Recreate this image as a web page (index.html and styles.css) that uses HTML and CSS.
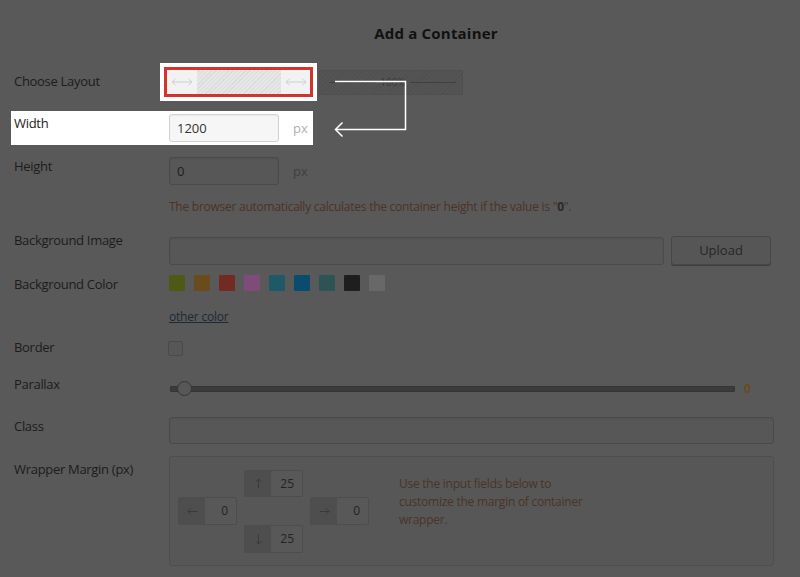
FILE: index.html
```html
<!DOCTYPE html>
<html lang="en">
<head>
<meta charset="utf-8">
<title>Add a Container</title>
<link rel="stylesheet" href="styles.css">
</head>
<body>
<div class="page">
  <h1 class="title">Add a Container</h1>

  <div class="row row-layout">
    <div class="label label-layout">Choose Layout</div>
    <div class="control layouts">
      <div class="spot spot-layout">
        <div class="layout layout-boxed">
          <div class="side"><svg width="22" height="8" viewBox="0 0 22 8"><path d="M1 4H21M4.5 1L1 4L4.5 7M17.5 1L21 4L17.5 7" fill="none" stroke="#cfcfcf" stroke-width="1"/></svg></div>
          <div class="hatch"></div>
          <div class="side"><svg width="22" height="8" viewBox="0 0 22 8"><path d="M1 4H21M4.5 1L1 4L4.5 7M17.5 1L21 4L17.5 7" fill="none" stroke="#cfcfcf" stroke-width="1"/></svg></div>
        </div>
      </div>
      <div class="layout layout-full">
        <span class="full-line"></span>
        <span class="full-text">100%</span>
        <span class="full-line"></span>
      </div>
    </div>
  </div>

  <div class="row row-width spot">
    <div class="label">Width</div>
    <div class="control inline">
      <div class="input input-short input-lit">1200</div>
      <span class="unit unit-lit">px</span>
    </div>
  </div>

  <div class="row row-height">
    <div class="label">Height</div>
    <div class="control inline">
      <div class="input input-short">0</div>
      <span class="unit">px</span>
    </div>
  </div>

  <div class="row row-help">
    <div class="label"></div>
    <div class="control help">The browser automatically calculates the container height if the value is "<b>0</b>".</div>
  </div>

  <div class="row row-image">
    <div class="label">Background Image</div>
    <div class="control inline pad5">
      <div class="input input-image"></div>
      <div class="button">Upload</div>
    </div>
  </div>

  <div class="row row-color">
    <div class="label">Background Color</div>
    <div class="control swatches">
      <span class="swatch c1"></span>
      <span class="swatch c2"></span>
      <span class="swatch c3"></span>
      <span class="swatch c4"></span>
      <span class="swatch c5"></span>
      <span class="swatch c6"></span>
      <span class="swatch c7"></span>
      <span class="swatch c8"></span>
      <span class="swatch c9"></span>
    </div>
  </div>

  <div class="row row-other">
    <div class="label"></div>
    <div class="control"><a class="link" href="#">other color</a></div>
  </div>

  <div class="row row-border">
    <div class="label">Border</div>
    <div class="control pad3"><span class="checkbox"></span></div>
  </div>

  <div class="row row-parallax">
    <div class="label">Parallax</div>
    <div class="control slider-wrap">
      <div class="slider"><span class="thumb"></span></div>
      <span class="slider-value">0</span>
    </div>
  </div>

  <div class="row row-class">
    <div class="label">Class</div>
    <div class="control"><div class="input input-class"></div></div>
  </div>

  <div class="row row-wrapper">
    <div class="label label-wrapper">Wrapper Margin (px)</div>
    <div class="control">
      <div class="margin-box">
        <div class="margin-grid">
          <div class="minput m-top"><span class="marrow"><svg width="9" height="11" viewBox="0 0 9 11"><path d="M4.5 10.5V1M1.5 4L4.5 1L7.5 4" fill="none" stroke="#3a3a3a" stroke-width="1"/></svg></span><span class="mval">25</span></div>
          <div class="minput m-left"><span class="marrow"><svg width="11" height="9" viewBox="0 0 11 9"><path d="M10.5 4.5H1M4 1.5L1 4.5L4 7.5" fill="none" stroke="#3a3a3a" stroke-width="1"/></svg></span><span class="mval">0</span></div>
          <div class="minput m-right"><span class="marrow"><svg width="11" height="9" viewBox="0 0 11 9"><path d="M0.5 4.5H10M7 1.5L10 4.5L7 7.5" fill="none" stroke="#3a3a3a" stroke-width="1"/></svg></span><span class="mval">0</span></div>
          <div class="minput m-bottom"><span class="marrow"><svg width="9" height="11" viewBox="0 0 9 11"><path d="M4.5 0.5V10M1.5 7L4.5 10L7.5 7" fill="none" stroke="#3a3a3a" stroke-width="1"/></svg></span><span class="mval">25</span></div>
        </div>
        <p class="margin-help">Use the input fields below to customize the margin of container wrapper.</p>
      </div>
    </div>
  </div>

  <svg class="connector" width="800" height="577" viewBox="0 0 800 577">
    <path d="M335 81.5H405.5V129.5H336" fill="none" stroke="#ffffff" stroke-width="1.5"/>
    <path d="M342.5 122.5L335.5 129.5L342.5 136.5" fill="none" stroke="#ffffff" stroke-width="1.5"/>
  </svg>
</div>
</body>
</html>
```

FILE: styles.css
```css
html, body {
  margin: 0;
  padding: 0;
  background: #595959;
}

body {
  font-family: "Open Sans", "Liberation Sans", sans-serif;
  color: #1c1c1c;
  width: 800px;
  height: 577px;
  overflow: hidden;
}

.page {
  position: relative;
  width: 800px;
  height: 577px;
  padding: 0 26px 0 14px;
  box-sizing: border-box;
}

.title {
  margin: 0;
  padding: 23px 0 0 84px;
  font-size: 15px;
  line-height: 20px;
  font-weight: 700;
  letter-spacing: 0.2px;
  text-align: center;
  color: #111;
}

.row {
  display: grid;
  grid-template-columns: 155px 1fr;
  align-items: start;
}

.label {
  font-size: 13px;
  line-height: 18px;
  letter-spacing: -0.3px;
  color: #1c1c1c;
}

.control {
  min-width: 0;
  font-size: 13px;
  line-height: 18px;
}

.inline {
  display: flex;
  align-items: center;
}

.pad5 { padding-top: 5px; }
.pad3 { padding-top: 3px; }

/* row spacing */
.row-layout { margin-top: 20px; }
.label-layout { padding-top: 9px; }
.row-width { margin-top: 10px; }
.row-height { margin-top: 12px; }
.row-help { margin-top: 13px; }
.row-image { margin-top: 15px; }
.row-color { margin-top: 10px; }
.row-other { margin-top: 14px; }
.row-border { margin-top: 12px; }
.row-parallax { margin-top: 19px; }
.row-class { margin-top: 19px; }
.row-wrapper { margin-top: 12px; }
.label-wrapper { padding-top: 4px; }

/* highlighted spots */
.spot { background: #ffffff; }

.row-width.spot {
  width: 302px;
  margin-left: -3px;
  padding: 3px 0 3px 3px;
  box-sizing: border-box;
}

.row-width .label { color: #222; }

/* layouts */
.layouts {
  display: flex;
  align-items: center;
  gap: 2px;
  margin-left: -9px;
}

.spot-layout {
  padding: 4px;
}

.layout {
  box-sizing: border-box;
  display: flex;
}

.layout-boxed {
  width: 149px;
  height: 30px;
  border: 3px solid #d2342c;
  background: #f2f2f2;
}

.side {
  width: 29px;
  display: flex;
  align-items: center;
  justify-content: center;
}

.layout-boxed .side:first-child { width: 30px; }

.hatch {
  flex: 1;
  background: repeating-linear-gradient(-45deg, #e6e6e6 0 2px, #dcdcdc 2px 3px);
}

.layout-full {
  width: 144px;
  height: 25px;
  align-items: center;
  gap: 4px;
  padding: 0 6px 0 10px;
  border: 1px solid #4f4f4f;
  background: repeating-linear-gradient(-45deg, #545454 0 2px, #505050 2px 3px);
}

.full-line {
  flex: 1;
  height: 1px;
  background: #404040;
}

.full-text {
  font-size: 10px;
  color: #3a3a3a;
  line-height: 12px;
}

/* inputs */
.input {
  box-sizing: border-box;
  height: 28px;
  border: 1px solid #4a4a4a;
  border-radius: 3px;
  background: #575757;
  font-size: 13px;
  line-height: 26px;
  padding-left: 7px;
  color: #202020;
  box-shadow: inset 0 1px 2px rgba(0,0,0,0.06);
}

.input-short { width: 110px; }

.input-lit {
  background: #f6f6f6;
  border-color: #d2d2d2;
  color: #333;
  box-shadow: inset 0 1px 2px rgba(0,0,0,0.05);
}

.unit {
  margin-left: 14px;
  font-size: 13px;
  color: #3f3f3f;
}

.unit-lit { color: #b0b0b0; }

.help {
  font-size: 12px;
  line-height: 18px;
  letter-spacing: -0.25px;
  color: #4c3327;
}

.help b { color: #2a2a2a; }

.input-image { width: 495px; }

.button {
  box-sizing: border-box;
  width: 100px;
  height: 29px;
  margin-left: 7px;
  border: 1px solid #474747;
  border-radius: 3px;
  background: #565656;
  box-shadow: 0 1px 0 #3e3e3e;
  text-align: center;
  font-size: 13px;
  line-height: 27px;
  color: #262626;
}

.input-class {
  width: 605px;
  height: 27px;
}

/* swatches */
.swatches {
  display: flex;
  gap: 9px;
  height: 18px;
}

.swatch {
  width: 16px;
  height: 16px;
  border-radius: 1px;
}

.c1 { background: #4e5913; }
.c2 { background: #6a4c1c; }
.c3 { background: #722a22; }
.c4 { background: #7f4c79; }
.c5 { background: #1f5967; }
.c6 { background: #0a4c6e; }
.c7 { background: #2c5454; }
.c8 { background: #1e1e1e; }
.c9 { background: #686868; }

.link {
  font-size: 12px;
  line-height: 18px;
  letter-spacing: -0.2px;
  color: #1b2a36;
  text-decoration: underline;
}

.checkbox {
  display: block;
  width: 15px;
  height: 15px;
  box-sizing: border-box;
  border: 1px solid #4a4a4a;
  border-radius: 2px;
  background: #575757;
  margin-left: -1px;
}

/* slider */
.slider-wrap {
  display: flex;
  align-items: center;
  height: 18px;
  padding-top: 5px;
}

.slider {
  position: relative;
  width: 565px;
  height: 6px;
  margin-left: 1px;
  box-sizing: border-box;
  border: 1px solid #353535;
  border-radius: 1px;
  background: #3b3b3b;
}

.thumb {
  position: absolute;
  left: 6px;
  top: -6px;
  width: 15px;
  height: 15px;
  box-sizing: border-box;
  border-radius: 50%;
  border: 1px solid #363636;
  background: #575757;
}

.slider-value {
  margin-left: 9px;
  font-size: 12px;
  font-weight: 700;
  color: #6a4a1d;
}

/* wrapper margin */
.margin-box {
  box-sizing: border-box;
  width: 605px;
  height: 110px;
  border: 1px solid #4e4e4e;
  border-radius: 3px;
  background: #575757;
  display: flex;
  align-items: flex-start;
  padding: 13px 0 0 8px;
}

.margin-grid {
  display: grid;
  grid-template-columns: 59px 59px 59px;
  grid-template-rows: 27px 28px 28px;
  column-gap: 7px;
}

.minput {
  box-sizing: border-box;
  display: flex;
  border: 1px solid #4d4d4d;
  border-radius: 2px;
  background: #585858;
  font-size: 12px;
  color: #232323;
}

.m-top { grid-column: 2; grid-row: 1; }
.m-left { grid-column: 1; grid-row: 2; }
.m-right { grid-column: 3; grid-row: 2; }
.m-bottom { grid-column: 2; grid-row: 3; }

.marrow {
  width: 26px;
  background: #4e4e4e;
  display: flex;
  align-items: center;
  justify-content: center;
}

.mval {
  flex: 1;
  text-align: right;
  padding-right: 8px;
  line-height: 25px;
}

.margin-help {
  margin: 5px 0 0 30px;
  width: 200px;
  font-size: 12px;
  line-height: 18px;
  letter-spacing: -0.25px;
  color: #4c3327;
}

.connector {
  position: absolute;
  left: 0;
  top: 0;
  pointer-events: none;
}
```
